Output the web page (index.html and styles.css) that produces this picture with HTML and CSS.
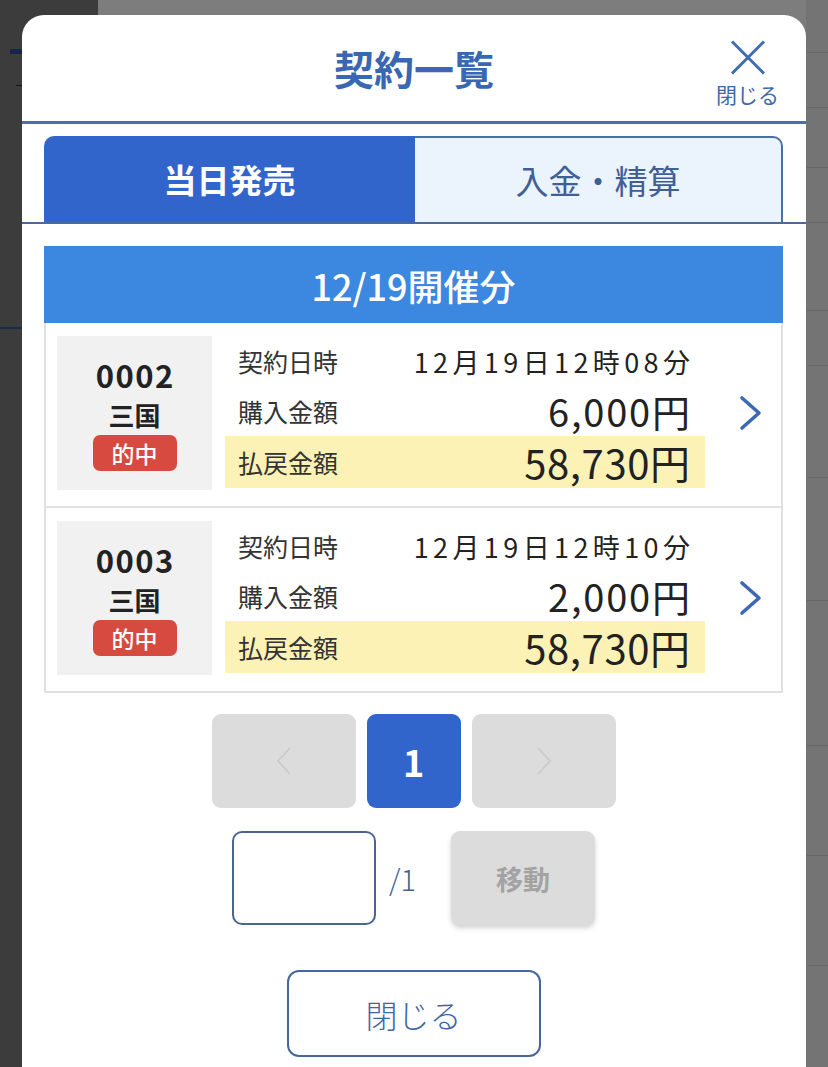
FILE: index.html
```html
<!DOCTYPE html>
<html lang="ja">
<head>
<meta charset="utf-8">
<title>契約一覧</title>
<link rel="stylesheet" href="styles.css">
</head>
<body>
<div class="modal">
  <header class="modal-head">
    <h1 class="title">契約一覧</h1>
    <div class="close-x">
      <svg class="x-icon" width="36" height="35" viewBox="0 0 36 35"><path d="M2 1.5 L34 33.5 M34 1.5 L2 33.5" stroke="#3e6cb0" stroke-width="3" fill="none"/></svg>
      <span>閉じる</span>
    </div>
  </header>
  <nav class="tabs">
    <div class="tab tab-active">当日発売</div>
    <div class="tab tab-idle">入金・精算</div>
  </nav>
  <section class="content">
    <div class="date-head">12/19開催分</div>
    <div class="list">
      <div class="card">
        <div class="ticket">
          <div class="ticket-no">0002</div>
          <div class="ticket-place">三国</div>
          <div class="badge">的中</div>
        </div>
        <div class="info">
          <div class="row"><span class="label">契約日時</span><span class="val-date">12月19日12時08分</span></div>
          <div class="row"><span class="label">購入金額</span><span class="val-amount">6,000円</span></div>
          <div class="row row-pay"><span class="label">払戻金額</span><span class="val-pay">58,730円</span></div>
        </div>
        <div class="chev"><svg width="26" height="36" viewBox="0 0 26 36"><path d="M4 3 L21 18 L4 33" stroke="#3c68b4" stroke-width="3.6" fill="none" stroke-linecap="round" stroke-linejoin="round"/></svg></div>
      </div>
      <div class="card">
        <div class="ticket">
          <div class="ticket-no">0003</div>
          <div class="ticket-place">三国</div>
          <div class="badge">的中</div>
        </div>
        <div class="info">
          <div class="row"><span class="label">契約日時</span><span class="val-date">12月19日12時10分</span></div>
          <div class="row"><span class="label">購入金額</span><span class="val-amount">2,000円</span></div>
          <div class="row row-pay"><span class="label">払戻金額</span><span class="val-pay">58,730円</span></div>
        </div>
        <div class="chev"><svg width="26" height="36" viewBox="0 0 26 36"><path d="M4 3 L21 18 L4 33" stroke="#3c68b4" stroke-width="3.6" fill="none" stroke-linecap="round" stroke-linejoin="round"/></svg></div>
      </div>
    </div>
    <div class="pager">
      <div class="pg pg-nav"><svg width="16" height="28" viewBox="0 0 16 28"><path d="M14 1 L2 14 L14 27" stroke="#c9c9c9" stroke-width="1.6" fill="none"/></svg></div>
      <div class="pg pg-num">1</div>
      <div class="pg pg-nav"><svg width="16" height="28" viewBox="0 0 16 28"><path d="M2 1 L14 14 L2 27" stroke="#c9c9c9" stroke-width="1.6" fill="none"/></svg></div>
    </div>
    <div class="jump">
      <div class="jump-input"></div>
      <span class="jump-total">/1</span>
      <div class="jump-btn">移動</div>
    </div>
    <div class="close-row">
      <div class="close-btn">閉じる</div>
    </div>
  </section>
</div>
</body>
</html>
```
FILE: styles.css
```css
* { box-sizing: border-box; }

body {
  margin: 0;
  height: 1067px;
  overflow: hidden;
  font-family: "Noto Sans CJK JP", "Noto Sans", sans-serif;
  background:
    linear-gradient(#15264a, #15264a) 10px 49px / 12px 5px no-repeat,
    linear-gradient(#111, #111) 16px 85px / 6px 1px no-repeat,
    linear-gradient(#1d2b45, #1d2b45) 0 327px / 22px 2px no-repeat,
    linear-gradient(#696969, #696969) 806px 52px / 22px 1px no-repeat,
    linear-gradient(#696969, #696969) 806px 107px / 22px 1px no-repeat,
    linear-gradient(#696969, #696969) 806px 167px / 22px 1px no-repeat,
    linear-gradient(#696969, #696969) 806px 222px / 22px 1px no-repeat,
    linear-gradient(#696969, #696969) 806px 310px / 22px 1px no-repeat,
    linear-gradient(#696969, #696969) 806px 365px / 22px 1px no-repeat,
    linear-gradient(#696969, #696969) 806px 477px / 22px 1px no-repeat,
    linear-gradient(#696969, #696969) 806px 600px / 22px 1px no-repeat,
    linear-gradient(#696969, #696969) 806px 745px / 22px 1px no-repeat,
    linear-gradient(#696969, #696969) 806px 855px / 22px 1px no-repeat,
    linear-gradient(#696969, #696969) 806px 965px / 22px 1px no-repeat,
    linear-gradient(to right, #3c3c3c 0 98px, #7d7d7d 98px 806px, #747474 806px);
}

.modal {
  margin: 15px 0 0 22px;
  width: 784px;
  height: 1052px;
  background: #fff;
  border-radius: 22px 22px 0 0;
}

/* header */
.modal-head {
  height: 109px;
  border-bottom: 3px solid #4a70a8;
  display: grid;
  grid-template-columns: 1fr auto 1fr;
  align-items: center;
}
.title {
  grid-column: 2;
  margin: 0;
  font-size: 40px;
  line-height: 1;
  font-weight: 700;
  color: #3a67b1;
}
.close-x {
  grid-column: 3;
  justify-self: end;
  align-self: start;
  margin: 25px 27px 0 0;
  display: flex;
  flex-direction: column;
  align-items: center;
  gap: 8px;
  color: #3f69a8;
  font-size: 21px;
  line-height: 22px;
}
.x-icon { display: block; }

/* tabs */
.tabs {
  display: flex;
  padding: 12px 23px 0 22px;
  border-bottom: 2px solid #4a6a9c;
}
.tab {
  flex: 1;
  height: 86px;
  display: flex;
  align-items: center;
  justify-content: center;
  font-size: 33px;
  line-height: 1;
}
.tab-active {
  flex: 0 0 371px;
  background: #3165cc;
  color: #fff;
  font-weight: 700;
  border-radius: 10px 0 0 0;
}
.tab-idle {
  background: #ebf3fd;
  color: #3f5f96;
  border: 2px solid #4a6fa5;
  border-left: 0;
  border-bottom: 0;
  border-radius: 0 10px 0 0;
}

/* content */
.content { padding: 22px 23px 0 22px; }

.date-head {
  height: 77px;
  background: #3c87e0;
  color: #fff;
  font-size: 36px;
  font-weight: 500;
  line-height: 1;
  display: flex;
  align-items: center;
  justify-content: center;
}

.list {
  border: 2px solid #e0e0e0;
  border-top: 0;
}
.card {
  display: flex;
  padding: 13px 0 16px 11px;
}
.card + .card { border-top: 2px solid #e2e2e2; }

.ticket {
  width: 155px;
  height: 154px;
  flex-shrink: 0;
  background: #f1f1f1;
  display: flex;
  flex-direction: column;
  align-items: center;
  justify-content: center;
  color: #222;
}
.ticket-no {
  font-size: 31px;
  font-weight: 700;
  letter-spacing: 1.5px;
  margin-right: -1.5px;
  line-height: 40px;
}
.ticket-place {
  font-size: 26px;
  font-weight: 700;
  line-height: 40px;
}
.badge {
  width: 84px;
  height: 36px;
  background: #d64a40;
  color: #fff;
  border-radius: 7px;
  font-size: 23px;
  font-weight: 500;
  line-height: 36px;
  text-align: center;
}

.info {
  width: 480px;
  margin-left: 13px;
  flex-shrink: 0;
}
.row {
  height: 50px;
  display: flex;
  align-items: center;
  justify-content: space-between;
  padding: 0 15px 0 13px;
}
.row-pay {
  height: 52px;
  background: #fcf2b6;
}
.label {
  font-size: 25px;
  line-height: 1;
  color: #333;
}
.val-date {
  font-size: 27px;
  line-height: 1;
  letter-spacing: 4.4px;
  margin-right: -4.4px;
  color: #222;
}
.val-amount {
  font-size: 38px;
  line-height: 1;
  letter-spacing: 1.8px;
  margin-right: -1.8px;
  color: #222;
}
.val-pay {
  font-size: 40px;
  line-height: 1;
  letter-spacing: 0.6px;
  margin-right: -0.6px;
  color: #222;
}
.chev {
  flex: 1;
  display: flex;
  align-items: center;
  justify-content: center;
  padding-left: 16px;
}

/* pager */
.pager {
  display: flex;
  justify-content: center;
  gap: 11px;
  margin-top: 21px;
}
.pg {
  height: 94px;
  border-radius: 9px;
  background: #dcdcdc;
  display: flex;
  align-items: center;
  justify-content: center;
}
.pg-nav { width: 144px; }
.pg-num {
  width: 94px;
  background: #3165cc;
  color: #fff;
  font-size: 36px;
  font-weight: 700;
  line-height: 1;
}

.jump {
  display: flex;
  justify-content: center;
  align-items: center;
  margin-top: 23px;
}
.jump-input {
  width: 144px;
  height: 94px;
  border: 2px solid #4a6690;
  border-radius: 10px;
  background: #fff;
}
.jump-total {
  margin: 0 35px 0 13px;
  font-size: 29px;
  font-weight: 300;
  color: #45628f;
}
.jump-btn {
  width: 144px;
  height: 94px;
  background: #dcdcdc;
  border-radius: 9px;
  color: #a3a3a3;
  font-size: 27px;
  font-weight: 700;
  display: flex;
  align-items: center;
  justify-content: center;
  box-shadow: 0 3px 5px rgba(0, 0, 0, 0.18);
}

.close-row {
  display: flex;
  justify-content: center;
  margin-top: 45px;
}
.close-btn {
  width: 254px;
  height: 87px;
  border: 2px solid #46679c;
  border-radius: 12px;
  font-size: 32px;
  font-weight: 300;
  color: #3d66a6;
  display: flex;
  align-items: center;
  justify-content: center;
}
```
